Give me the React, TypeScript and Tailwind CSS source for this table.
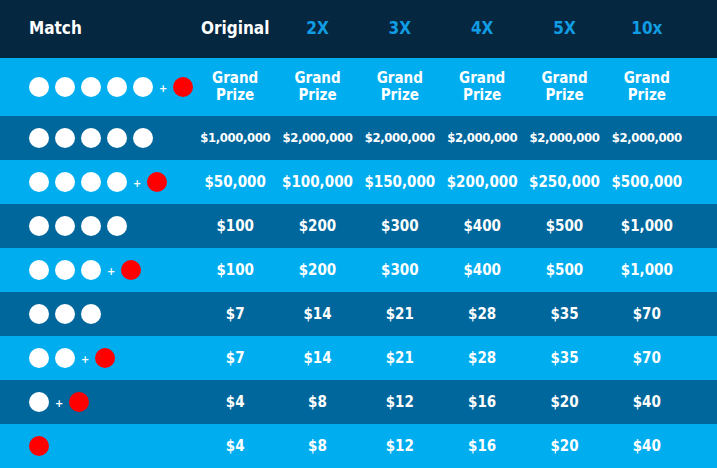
import React from 'react';

type Row = { white: number; red: boolean; prizes: string[] };

const multipliers = ['2X', '3X', '4X', '5X', '10x'];

const rows: Row[] = [
  { white: 5, red: true, prizes: Array(6).fill('Grand Prize') },
  { white: 5, red: false, prizes: ['$1,000,000', '$2,000,000', '$2,000,000', '$2,000,000', '$2,000,000', '$2,000,000'] },
  { white: 4, red: true, prizes: ['$50,000', '$100,000', '$150,000', '$200,000', '$250,000', '$500,000'] },
  { white: 4, red: false, prizes: ['$100', '$200', '$300', '$400', '$500', '$1,000'] },
  { white: 3, red: true, prizes: ['$100', '$200', '$300', '$400', '$500', '$1,000'] },
  { white: 3, red: false, prizes: ['$7', '$14', '$21', '$28', '$35', '$70'] },
  { white: 2, red: true, prizes: ['$7', '$14', '$21', '$28', '$35', '$70'] },
  { white: 1, red: true, prizes: ['$4', '$8', '$12', '$16', '$20', '$40'] },
  { white: 0, red: true, prizes: ['$4', '$8', '$12', '$16', '$20', '$40'] },
];

function Balls({ white, red }: { white: number; red: boolean }) {
  return (
    <div className="flex items-center gap-[6px]">
      {Array.from({ length: white }).map((_, i) => (
        <span key={i} className="w-5 h-5 rounded-full bg-white" />
      ))}
      {white > 0 && red && <span className="text-white text-[11px] font-bold leading-none mt-[3px]">+</span>}
      {red && <span className="w-5 h-5 rounded-full bg-[#ff0000]" />}
    </div>
  );
}

export default function App() {
  return (
    <div
      className="w-[717px] h-[468px] overflow-hidden"
      style={{ fontFamily: '"DejaVu Sans Condensed", "DejaVu Sans", sans-serif' }}
    >
      {/* Header */}
      <div className="h-[58px] bg-[#062740] px-[29px] grid grid-cols-[165px_repeat(6,minmax(0,1fr))] items-center">
        <div className="text-white font-bold text-[17px]">Match</div>
        <div className="text-white font-bold text-[17px] text-center">Original</div>
        {multipliers.map((m) => (
          <div key={m} className="text-[#109de4] text-[17px] font-semibold text-center">
            {m}
          </div>
        ))}
      </div>

      {/* Rows */}
      {rows.map((row, idx) => {
        const grand = idx === 0;
        const long = idx === 1;
        return (
          <div
            key={idx}
            className={`px-[29px] grid grid-cols-[165px_repeat(6,minmax(0,1fr))] items-center ${
              grand ? 'h-[58px]' : 'h-[44px]'
            } ${idx % 2 === 0 ? 'bg-[#00aeef]' : 'bg-[#00679c]'}`}
          >
            <Balls white={row.white} red={row.red} />
            {row.prizes.map((p, i) =>
              grand ? (
                <div key={i} className="text-white font-bold text-center text-[15px] leading-[17px]">
                  Grand
                  <br />
                  Prize
                </div>
              ) : (
                <div
                  key={i}
                  className={`text-white font-bold text-center whitespace-nowrap ${
                    long ? 'text-[13px] tracking-[-0.4px]' : 'text-[15px]'
                  }`}
                >
                  {p}
                </div>
              )
            )}
          </div>
        );
      })}
    </div>
  );
}
